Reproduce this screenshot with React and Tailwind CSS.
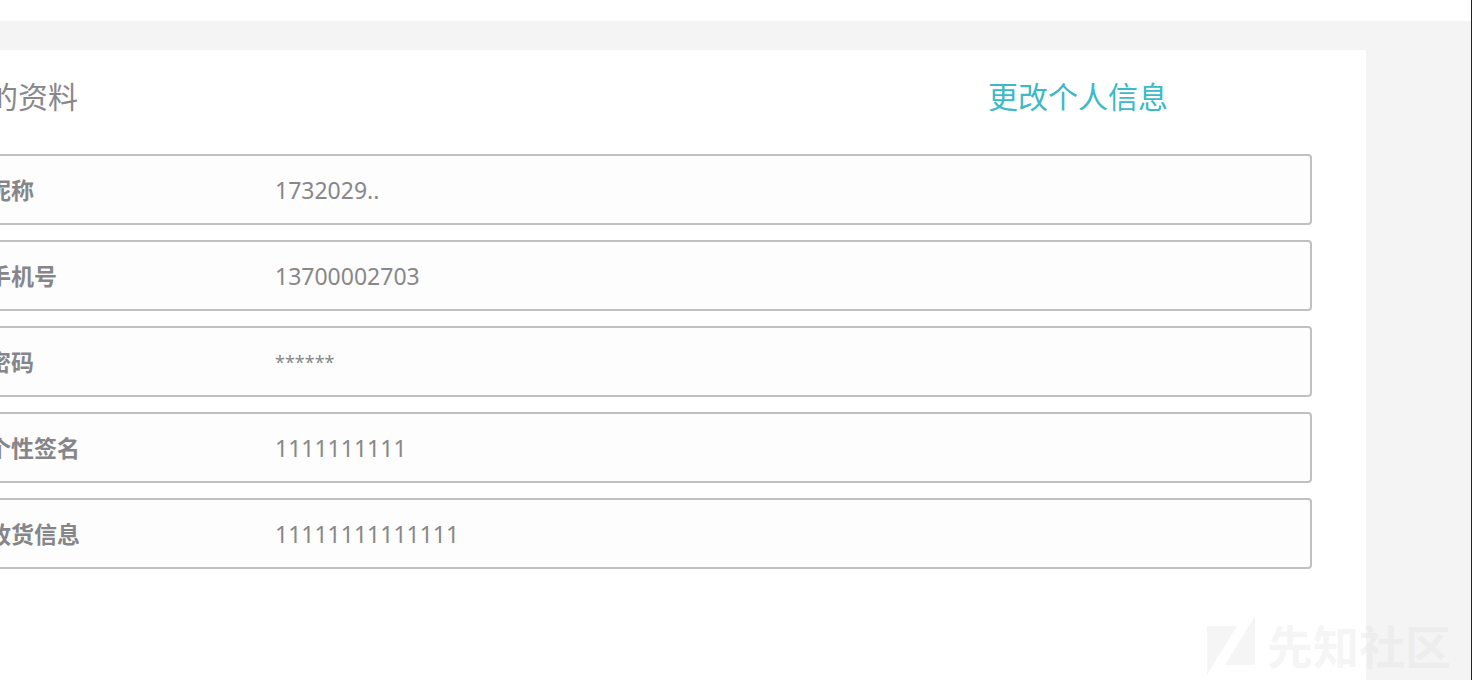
const profile = [
  { label: '昵称', value: '1732029..' },
  { label: '手机号', value: '13700002703' },
  { label: '密码', value: '******', masked: true },
  { label: '个性签名', value: '1111111111' },
  { label: '收货信息', value: '11111111111111' },
];

function ProfileRow({ label, value, masked }) {
  return (
    <div className="flex h-[71px] items-center rounded-[4px] border-2 border-[#c0c0c0] bg-[#fdfdfd] px-7">
      <dt className="w-[287px] shrink-0 text-[23px] leading-8 font-bold text-[#86868a]">{label}</dt>
      <dd className={masked ? 'text-[18px] leading-8 text-[#888888]' : 'text-[23px] leading-8 text-[#888888]'}>
        {value}
      </dd>
    </div>
  );
}

function Watermark() {
  return (
    <div className="pointer-events-none absolute right-5 bottom-0 flex items-center gap-3 text-[#d8d8d8]/25">
      <svg width="48" height="60" viewBox="0 0 48 60" fill="currentColor" aria-hidden="true">
        <polygon points="0,10 30,10 0,59" />
        <polygon points="48,0 48,49 18,49" />
      </svg>
      <span className="text-[46px] leading-[68px] font-bold">先知社区</span>
    </div>
  );
}

export default function App() {
  return (
    <div className="relative flex min-h-screen flex-col overflow-hidden border-r border-[#222222] bg-[#f4f4f4] font-['Noto_Sans','Noto_Sans_CJK_SC',sans-serif]">
      <header className="h-[21px] bg-white" />
      <main className="flex grow flex-col pt-[29px] pr-[105px]">
        <section className="-ml-24 grow bg-white px-[54px] pt-6">
          <div className="flex items-center justify-between pr-36">
            <h1 className="text-[30px] leading-[46px] text-[#88888c]">我的资料</h1>
            <a href="#edit" className="text-[30px] leading-[46px] text-[#3cbac6]">更改个人信息</a>
          </div>
          <dl className="mt-[34px] flex flex-col gap-[15px]">
            {profile.map((item) => (
              <ProfileRow key={item.label} {...item} />
            ))}
          </dl>
        </section>
      </main>
      <Watermark />
    </div>
  );
}
